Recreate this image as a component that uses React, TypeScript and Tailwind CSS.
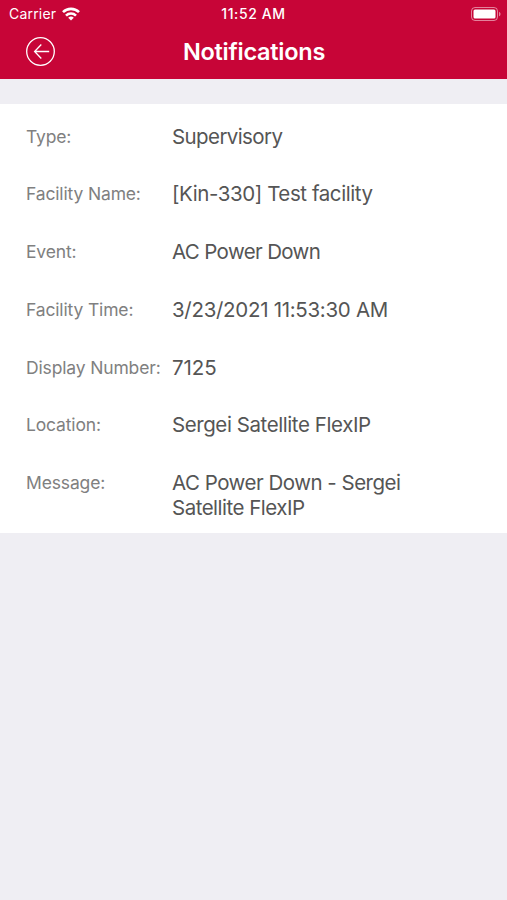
const details = [
  { label: "Type:", value: "Supervisory", tracking: "tracking-[-0.6px]" },
  { label: "Facility Name:", value: "[Kin-330] Test facility", tracking: "tracking-[-0.42px]" },
  { label: "Event:", value: "AC Power Down", tracking: "tracking-[-0.64px]" },
  { label: "Facility Time:", value: "3/23/2021 11:53:30 AM", tracking: "tracking-[-0.3px]" },
  { label: "Display Number:", value: "7125", tracking: "tracking-[-0.1px]" },
  { label: "Location:", value: "Sergei Satellite FlexIP", tracking: "tracking-[-0.42px]" },
  { label: "Message:", value: "AC Power Down - Sergei Satellite FlexIP", tracking: "tracking-[-0.5px]" },
];

function WifiIcon() {
  return (
    <svg width="18" height="14" viewBox="0 0 18 14" fill="none" stroke="white" strokeWidth="2.6">
      <path d="M1 5.2a11.3 11.3 0 0 1 16 0" />
      <path d="M4 8.6a7.1 7.1 0 0 1 10 0" />
      <path d="M9 13.6 6.2 10.8a4 4 0 0 1 5.6 0Z" fill="white" stroke="none" />
    </svg>
  );
}

function BatteryIcon() {
  return (
    <svg width="30" height="14" viewBox="0 0 30 14" fill="none">
      <rect x="0.5" y="0.5" width="26" height="13" rx="3.5" stroke="white" strokeOpacity="0.5" />
      <rect x="2.5" y="2.5" width="22" height="9" rx="1.5" fill="white" />
      <path d="M28 4.7c2 .8 2 3.8 0 4.6Z" fill="white" fillOpacity="0.5" />
    </svg>
  );
}

function BackIcon() {
  return (
    <svg width="29" height="29" viewBox="0 0 29 29" fill="none" stroke="white" strokeWidth="1.3">
      <circle cx="14.5" cy="14.5" r="13.8" />
      <path d="M23.2 14.5H9M15.3 7.5 8.6 14.500l6.700 7" />
    </svg>
  );
}

export default function App() {
  return (
    <main className="min-h-screen bg-[#efeef3] font-['Inter',sans-serif]">
      <header className="h-[79px] bg-[#c70537] text-white">
        <div className="grid h-[27px] grid-cols-[1fr_auto_1fr] items-center px-[6px] text-[14px]">
          <div className="flex items-center gap-[6px] pl-[3px] tracking-[0.2px]">
            Carrier
            <WifiIcon />
          </div>
          <div className="font-medium tracking-[0.6px]">11:52 AM</div>
          <div className="flex justify-end">
            <BatteryIcon />
          </div>
        </div>
        <div className="grid h-[49px] grid-cols-[1fr_auto_1fr] items-center px-[26px]">
          <button type="button" aria-label="Back" className="justify-self-start">
            <BackIcon />
          </button>
          <h1 className="pl-px text-[23.5px] font-semibold tracking-[-0.25px]">Notifications</h1>
        </div>
      </header>

      <dl className="mt-[24.5px] h-[429.5px] bg-white pt-[21px]">
        {details.map(({ label, value, tracking }) => (
          <div key={label} className="flex h-[57.8px] pl-[26px] leading-[24.5px]">
            <dt className="w-[146px] shrink-0 text-[17.5px] tracking-[-0.15px] whitespace-nowrap text-[#808080]">{label}</dt>
            <dd className={`w-[260px] text-[20.5px] text-[#555] ${tracking}`}>{value}</dd>
          </div>
        ))}
      </dl>
    </main>
  );
}
